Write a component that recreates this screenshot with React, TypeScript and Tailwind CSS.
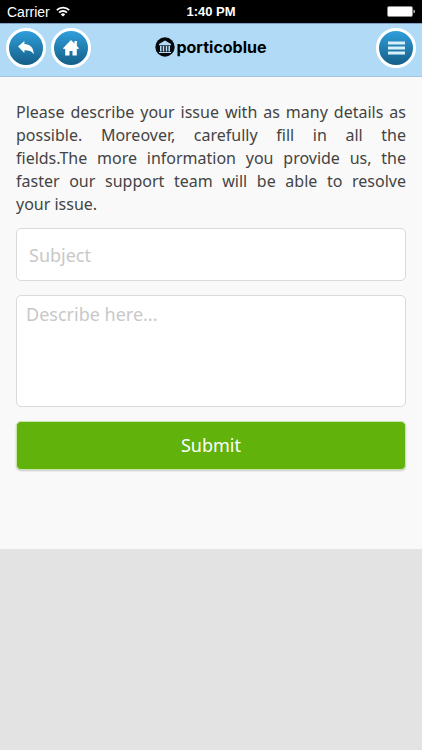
import { useState } from 'react';
import type { ReactNode } from 'react';

function RoundButton({ label, children }: { label: string; children: ReactNode }) {
  return (
    <button
      type="button"
      aria-label={label}
      className="flex size-10 items-center justify-center rounded-full border-3 border-white bg-linear-to-b from-[#2f9fdc] to-[#155f88] text-white"
    >
      {children}
    </button>
  );
}

function StatusBar() {
  return (
    <div className="grid h-[23px] grid-cols-3 items-center bg-black px-[7px] text-[13px] leading-none text-white">
      <div className="flex items-center gap-[6px] text-[14px]">
        <span>Carrier</span>
        <svg viewBox="0 0 14 11" className="h-[11px] w-[14px]" fill="none" stroke="currentColor" strokeWidth="1.8">
          <path d="M0.8 4.1a8.8 8.8 0 0 1 12.4 0" />
          <path d="M3.1 6.6a5.5 5.5 0 0 1 7.8 0" />
          <path d="M4.8 8.4a3.1 3.1 0 0 1 4.4 0L7 10.6z" fill="currentColor" stroke="none" />
        </svg>
      </div>
      <span className="text-center font-bold">1:40 PM</span>
      <svg viewBox="0 0 28 11" className="h-[11px] w-7 justify-self-end">
        <rect x="0.5" y="0.5" width="25" height="10" rx="1.5" fill="#fff" stroke="#8a8a8a" />
        <path d="M26.5 3.5v4q1.5-.5 1.5-2t-1.5-2z" fill="#ccc" />
      </svg>
    </div>
  );
}

function Logo() {
  return (
    <div className="flex items-center gap-px pb-[2px] text-black">
      <svg viewBox="0 0 20 20" className="size-5">
        <circle cx="10" cy="10" r="9.7" fill="#05090d" />
        <path d="M10 3.6 4 7v1.2h12V7z" fill="#b3daf6" />
        <path d="M5 8.8h1.6v5.6H5zM7.7 8.8h1.6v5.6H7.7zM10.7 8.8h1.6v5.6h-1.6zM13.4 8.8H15v5.6h-1.6zM4 14.9h12v1H4z" fill="#b3daf6" />
      </svg>
      <span className="font-['Inter',sans-serif] text-[16px] leading-5 font-bold">porticoblue</span>
    </div>
  );
}

function Header() {
  return (
    <header className="grid h-[54px] grid-cols-[1fr_auto_1fr] items-center border-y border-t-[#7e9fc4] border-b-[#a3c4e3] bg-[#b1daf7] px-[6px] pb-[5px]">
      <div className="flex gap-[5px]">
        <RoundButton label="Back">
          <svg viewBox="0 0 16 14" className="h-[14px] w-4" fill="currentColor">
            <path d="M0 5.6 6.4 0v3c5.4.2 9 3 9.4 10.2-2.2-3.2-5-4-9.4-4v2.9z" />
          </svg>
        </RoundButton>
        <RoundButton label="Home">
          <svg viewBox="0 0 16 16" className="size-4" fill="currentColor">
            <path d="M8 0 0 8.2l1 1.1 1.2-.8V15.6h4.3v-4.7h3v4.7h4.3V8.5l1.2.8 1-1.1-2.1-2.2V1h-2.4v2.5z" />
          </svg>
        </RoundButton>
      </div>
      <Logo />
      <div className="flex justify-end">
        <RoundButton label="Menu">
          <svg viewBox="0 0 17 14" className="h-[14px] w-[17px]" fill="#d9effa">
            <path d="M0 0.5h17v3H0zM0 5.5h17v3H0zM0 10.5h17v3H0z" />
          </svg>
        </RoundButton>
      </div>
    </header>
  );
}

export default function App() {
  const [subject, setSubject] = useState('');
  const [description, setDescription] = useState('');

  return (
    <div className="min-h-screen bg-[#e3e3e3] font-['Liberation_Sans',sans-serif]">
      <StatusBar />
      <Header />
      <main className="bg-[#f9f9f9] px-4 pt-6 pb-[79px] font-['Noto_Sans',sans-serif]">
        <p className="text-justify text-[16px] leading-[23px] text-[#444]">
          Please describe your issue with as many details as possible. Moreover, carefully fill in all the
          fields.The&nbsp;more information you provide us, the faster our support team will be able to resolve
          your&nbsp;issue.
        </p>
        <form onSubmit={(e) => e.preventDefault()} className="mt-3 flex flex-col gap-[14px]">
          <input
            type="text"
            aria-label="Subject"
            placeholder="Subject"
            value={subject}
            onChange={(e) => setSubject(e.target.value)}
            className="h-[53px] w-full rounded-[5px] border border-[#dadada] bg-white px-3 text-[18px] text-[#444] placeholder:text-[#c8c8c8]"
          />
          <textarea
            aria-label="Description"
            placeholder="Describe here..."
            value={description}
            onChange={(e) => setDescription(e.target.value)}
            className="block h-28 w-full resize-none rounded-[5px] border border-[#dadada] bg-white px-[9px] py-[6px] text-[18px] leading-6 text-[#444] placeholder:text-[#c8c8c8]"
          />
          <button
            type="submit"
            className="h-[49px] w-full rounded-[5px] border border-[#c9e5b0] bg-[#61b20a] text-[18px] text-white shadow-[0_1px_2px_rgba(0,0,0,0.2)]"
          >
            Submit
          </button>
        </form>
      </main>
    </div>
  );
}
